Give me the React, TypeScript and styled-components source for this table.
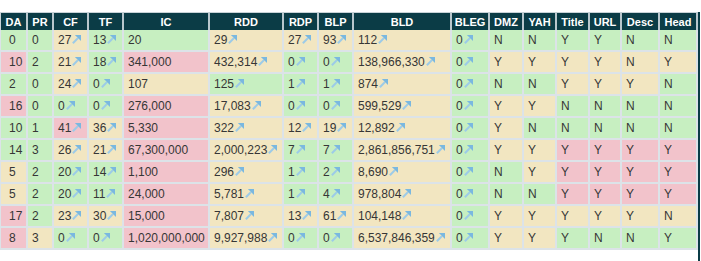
import styled, { createGlobalStyle } from "styled-components";

const GlobalStyle = createGlobalStyle`
  body {
    margin: 0;
    background: #ffffff;
    font-family: "Liberation Sans", Arial, sans-serif;
  }
`;

type Tone = "g" | "y" | "p";

const toneColors: Record<Tone, string> = {
  g: "#c7efc1",
  y: "#f2e6c1",
  p: "#f2c3cb",
};

const columns = [
  { name: "DA", width: 28, arrow: false },
  { name: "PR", width: 26, arrow: false },
  { name: "CF", width: 35, arrow: true },
  { name: "TF", width: 35, arrow: true },
  { name: "IC", width: 86, arrow: false },
  { name: "RDD", width: 74, arrow: true },
  { name: "RDP", width: 35, arrow: true },
  { name: "BLP", width: 35, arrow: true },
  { name: "BLD", width: 98, arrow: true },
  { name: "BLEG", width: 38, arrow: true },
  { name: "DMZ", width: 34, arrow: false },
  { name: "YAH", width: 33, arrow: false },
  { name: "Title", width: 33, arrow: false },
  { name: "URL", width: 32, arrow: false },
  { name: "Desc", width: 38, arrow: false },
  { name: "Head", width: 38, arrow: false },
];

// values separated by "|", tones one letter per column
const rows = [
  ["0|0|27|13|20|29|27|93|112|0|N|N|Y|Y|N|N", "ggyggyyyyggggggg"],
  ["10|2|21|18|341,000|432,314|0|0|138,966,330|0|Y|Y|Y|Y|N|Y", "pgygpyggygyyyyyy"],
  ["2|0|24|0|107|125|1|1|874|0|N|N|Y|Y|Y|N", "ggygygggygggyyyg"],
  ["16|0|0|0|276,000|17,083|0|0|599,529|0|Y|Y|N|N|N|N", "pgggpyggygyygggg"],
  ["10|1|41|36|5,330|322|12|19|12,892|0|Y|N|N|N|N|N", "ggpypyyyygyggggg"],
  ["14|3|26|21|67,300,000|2,000,223|7|7|2,861,856,751|0|Y|Y|Y|Y|Y|Y", "ggyypyggygyypppp"],
  ["5|2|20|14|1,100|296|1|2|8,690|0|N|Y|Y|Y|Y|Y", "ygggpyggyggypppp"],
  ["5|2|20|11|24,000|5,781|1|4|978,804|0|N|N|Y|Y|Y|Y", "ygggpyggygggpppp"],
  ["17|2|23|30|15,000|7,807|13|61|104,148|0|Y|Y|Y|Y|Y|N", "pgyypyyyygyyyyyy"],
  ["8|3|0|0|1,020,000,000|9,927,988|0|0|6,537,846,359|0|Y|Y|Y|N|N|Y", "pyggpyggygyygggg"],
];

const Frame = styled.div`
  padding-top: 12px;
`;

const Panel = styled.div`
  width: 698px;
  min-height: 249px;
  border-right: 2px solid #0b3c46;
`;

const Table = styled.table`
  width: 698px;
  table-layout: fixed;
  border-collapse: separate;
  border-spacing: 0;
`;

const HeadCell = styled.th<{ $w: number }>`
  box-sizing: border-box;
  width: ${(p) => p.$w}px;
  height: 18px;
  padding: 0;
  background: #0b3c46;
  border-top: 1px solid #c9d3d8;
  border-right: 2px solid #b9c7cd;
  color: #ffffff;
  font-size: 11px;
  font-weight: bold;
  text-align: center;
  vertical-align: middle;
  white-space: nowrap;
  &:first-child {
    border-left: 1px solid #c9d3d8;
  }
`;

const Cell = styled.td<{ $tone: Tone }>`
  box-sizing: border-box;
  height: 22px;
  padding: 0 0 0 4px;
  background: ${(p) => toneColors[p.$tone]};
  border-right: 2px solid #dce3e8;
  border-bottom: 2px solid #dce3e8;
  color: #363636;
  font-size: 12px;
  text-align: left;
  vertical-align: middle;
  white-space: nowrap;
  &:first-child {
    padding-left: 8px;
    border-left: 1px solid #dce3e8;
  }
`;

const ArrowIcon = styled.svg`
  width: 9px;
  height: 9px;
  margin-left: 1px;
  vertical-align: baseline;
`;

function Arrow() {
  return (
    <ArrowIcon viewBox="0 0 10 10">
      <line x1="1" y1="9.2" x2="6.5" y2="3.5" stroke="#9ccbe8" strokeWidth="2.3" />
      <polygon points="10,0 10,6.8 3.2,0" fill="#7ab8e0" />
    </ArrowIcon>
  );
}

export default function App() {
  return (
    <>
      <GlobalStyle />
      <Frame>
        <Panel>
          <Table>
            <thead>
              <tr>
                {columns.map((c) => (
                  <HeadCell key={c.name} $w={c.width}>
                    {c.name}
                  </HeadCell>
                ))}
              </tr>
            </thead>
            <tbody>
              {rows.map(([values, tones], r) => (
                <tr key={r}>
                  {values.split("|").map((v, i) => (
                    <Cell key={i} $tone={tones[i] as Tone}>
                      {v}
                      {columns[i].arrow && <Arrow />}
                    </Cell>
                  ))}
                </tr>
              ))}
            </tbody>
          </Table>
        </Panel>
      </Frame>
    </>
  );
}
